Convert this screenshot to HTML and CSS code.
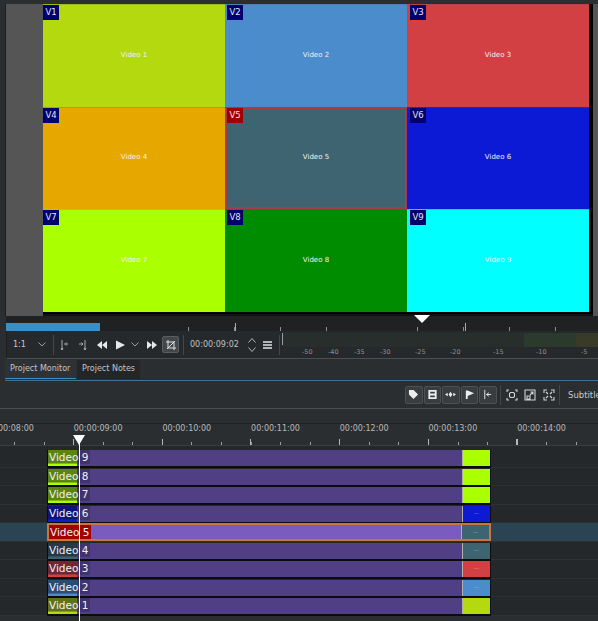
FILE: index.html
```html
<!DOCTYPE html>
<html lang="en">
<head>
    <meta charset="UTF-8">
    <title>Project Monitor</title>
    <link rel="stylesheet" href="styles.css">
</head>
<body>
<div class="app">
    <div class="monitor">
        <div class="side_rail"></div>
        <div class="canvas">
            <div class="multicam">
                <div class="cam c1"><span class="cam_tag">V1</span><span class="cam_name">Video 1</span></div>
                <div class="cam c2"><span class="cam_tag">V2</span><span class="cam_name">Video 2</span></div>
                <div class="cam c3"><span class="cam_tag">V3</span><span class="cam_name">Video 3</span></div>
                <div class="cam c4"><span class="cam_tag">V4</span><span class="cam_name">Video 4</span></div>
                <div class="cam c5 cam_active"><span class="cam_tag tag_active">V5</span><span class="cam_name">Video 5</span></div>
                <div class="cam c6"><span class="cam_tag">V6</span><span class="cam_name">Video 6</span></div>
                <div class="cam c7"><span class="cam_tag">V7</span><span class="cam_name">Video 7</span></div>
                <div class="cam c8"><span class="cam_tag">V8</span><span class="cam_name">Video 8</span></div>
                <div class="cam c9"><span class="cam_tag">V9</span><span class="cam_name">Video 9</span></div>
            </div>
        </div>
    </div>

    <div class="monitor_ruler">
        <div class="zone"></div>
        <div class="ruler_head"></div>
    </div>

    <div class="controls">
        <span class="zoom_value">1:1</span>
        <svg class="chev" viewBox="0 0 8 5"><path d="M.5 .5 4 4 7.500 .5"/></svg>
        <span class="divider first_divider"></span>
        <svg class="ctl" viewBox="0 0 12 12"><path d="M4 1v10M3 9l1 2 1-2M6 5h3M8 3.500 9.500 5 8 6.500"/></svg>
        <svg class="ctl" viewBox="0 0 12 12"><path d="M8 1v10M7 9l1 2 1-2M2 5h4M4.500 3.500 6 5 4.500 6.500"/></svg>
        <svg class="ctl solid" viewBox="0 0 12 12"><path d="M6 2v8L1 6zM11 2v8L6 6z"/></svg>
        <svg class="ctl solid play" viewBox="0 0 12 12"><path d="M2 1.500 11 6 2 10.500z"/></svg>
        <svg class="chev small_chev" viewBox="0 0 8 5"><path d="M.5 .5 4 4 7.500 .5"/></svg>
        <svg class="ctl solid forward" viewBox="0 0 12 12"><path d="M1 2v8l5-4zM6 2v8l5-4z"/></svg>
        <span class="crop_btn">
            <svg class="ctl crop_icon" viewBox="0 0 12 12"><path d="M3 1v8h8M1 3h8v8M2 10 10 2"/></svg>
        </span>
        <span class="divider crop_divider"></span>
        <span class="timecode">00:00:09:02</span>
        <svg class="spin" viewBox="0 0 8 16"><path d="M.5 5.500 4 1.500 7.500 5.500M.5 10.500 4 14.500 7.500 10.500"/></svg>
        <svg class="menu_icon" viewBox="0 0 9 8"><path d="M0 1h9M0 4h9M0 7h9"/></svg>
        <span class="divider meter_divider"></span>
        <div class="meter">
            <div class="meter_bar"><span class="peak"></span></div>
            <div class="meter_scale">
                <span class="step_s">-50</span>
                <span class="step_s">-40</span>
                <span class="step_s">-35</span>
                <span class="step_m">-30</span>
                <span class="step_m">-25</span>
                <span class="step_l">-20</span>
                <span class="step_l">-15</span>
                <span class="step_e">-10</span>
                <span>-5</span>
            </div>
        </div>
    </div>

    <div class="tabs">
        <span class="tab tab_on">Project Monitor</span>
        <span class="tab">Project Notes</span>
    </div>

    <div class="toolbar">
        <div class="tool_group">
            <span class="tool"><svg viewBox="0 0 12 12"><path class="fill" d="M1 1h5l5 5-5 5-5-5z"/></svg></span>
            <span class="tool"><svg viewBox="0 0 12 12"><path class="fill" d="M1.500 1h9v10h-9zM3.500 3v2h5V3zM3.500 7v2h5V7z" fill-rule="evenodd"/></svg></span>
            <span class="tool"><svg viewBox="0 0 12 12"><path class="fill" d="M4 6l2-3 2 3-2 3zM0 6l3-2v4zM12 6 9 8V4z"/></svg></span>
            <span class="tool"><svg viewBox="0 0 12 12"><path class="fill" d="M2 1.500h2l7 3-7 3V11H2z"/></svg></span>
            <span class="tool"><svg viewBox="0 0 12 12"><path class="line" d="M3 1v10M5 6h5M7.500 4 5 6l2.500 2"/></svg></span>
        </div>
        <span class="divider tool_divider"></span>
        <svg class="view_icon" viewBox="0 0 12 12"><path d="M1 3V1h2M9 1h2v2M11 9v2H9M3 11H1V9M4.500 3.500h3l1 1v3l-1 1h-3l-1-1v-3z"/></svg>
        <svg class="view_icon" viewBox="0 0 12 12"><path d="M1 1h10v10H1zM3 7h3v3H3zM6 6l3-3M6.500 3H9v2.500"/></svg>
        <svg class="view_icon" viewBox="0 0 12 12"><path d="M1 4V1h3M8 1h3v3M11 8v3H8M4 11H1V8M5 5 3 3M7 5l2-2M7 7l2 2M5 7l-2 2"/></svg>
        <span class="divider subtitle_divider"></span>
        <span class="subtitle">Subtitle</span>
    </div>

    <div class="gap_bar"></div>

    <div class="time_ruler">
        <div class="time_labels">
            <span>00:00:08:00</span>
            <span>00:00:09:00</span>
            <span>00:00:10:00</span>
            <span>00:00:11:00</span>
            <span>00:00:12:00</span>
            <span>00:00:13:00</span>
            <span>00:00:14:00</span>
        </div>
    </div>

    <div class="tracks">
        <div class="track"><div class="clip"><div class="thumb c7"><span class="clip_name">Video 9</span></div><div class="clip_body"></div><div class="thumb_end c7"></div></div></div>
        <div class="track"><div class="clip"><div class="thumb c7"><span class="clip_name">Video 8</span></div><div class="clip_body"></div><div class="thumb_end c7"></div></div></div>
        <div class="track"><div class="clip"><div class="thumb c7"><span class="clip_name">Video 7</span></div><div class="clip_body"></div><div class="thumb_end c7"></div></div></div>
        <div class="track"><div class="clip"><div class="thumb c6"><span class="clip_name">Video 6</span></div><div class="clip_body"></div><div class="thumb_end c6">...</div></div></div>
        <div class="track track_on"><div class="clip clip_on"><div class="thumb c5"><span class="clip_name name_on">Video 5</span></div><div class="clip_body"></div><div class="thumb_end c5">...</div></div></div>
        <div class="track"><div class="clip"><div class="thumb c5"><span class="clip_name">Video 4</span></div><div class="clip_body"></div><div class="thumb_end c5">...</div></div></div>
        <div class="track"><div class="clip"><div class="thumb c3"><span class="clip_name">Video 3</span></div><div class="clip_body"></div><div class="thumb_end c3">...</div></div></div>
        <div class="track"><div class="clip"><div class="thumb c2"><span class="clip_name">Video 2</span></div><div class="clip_body"></div><div class="thumb_end c2">...</div></div></div>
        <div class="track"><div class="clip"><div class="thumb c1"><span class="clip_name">Video 1</span></div><div class="clip_body"></div><div class="thumb_end c1"></div></div></div>
    </div>

    <div class="playhead"></div>
</div>
</body>
</html>
```

FILE: styles.css
```css
* {
    box-sizing: border-box;
}

html, body {
    margin: 0;
    padding: 0;
    background: #2b2e31;
}

body {
    width: 598px;
    height: 621px;
    overflow: hidden;
    font-family: "DejaVu Sans", sans-serif;
    font-size: 8px;
    color: #c9cccd;
}

.app {
    position: relative;
    width: 598px;
    height: 621px;
}

/* monitor */

.monitor {
    display: flex;
    height: 316px;
    padding-top: 4px;
    background: #2b2e31;
}

.side_rail {
    width: 6px;
    border-right: 1px solid #1b1d1f;
}

.canvas {
    display: flex;
    flex: 1;
    padding-left: 37px;
    background: #555555;
}

.multicam {
    display: grid;
    grid-template-columns: 182px 182px 182px;
    grid-template-rows: 103px 102px 103px;
    width: 550px;
    height: 312px;
    padding-right: 4px;
    background: #000;
    border-bottom: 2px solid #101112;
    align-content: start;
}

.cam {
    display: flex;
    align-items: center;
    justify-content: center;
    position: relative;
    padding-bottom: 2px;
    box-shadow: inset 0 1px 0 rgba(90, 90, 90, 0.25);
}

.cam_tag {
    position: absolute;
    top: 1px;
    left: 0;
    width: 16px;
    height: 15px;
    background: #00006e;
    color: #e6e6f0;
    font-size: 8.500px;
    line-height: 15px;
    text-align: center;
}

.cam:nth-child(3n+2) .cam_tag {
    left: 2px;
}

.cam:nth-child(3n) .cam_tag {
    left: 3px;
}

.tag_active {
    background: #a00000;
}

.cam_name {
    color: #f2f2f2;
    font-size: 7px;
}

.cam_active {
    box-shadow: inset 1px 1px 0 1px #a83a4c, inset -1px -1px 0 1px #a83a4c;
}

.c1 { background-color: #b5d90f; }
.c2 { background-color: #4a8ccc; }
.c3 { background-color: #d24044; }
.c4 { background-color: #e6a800; }
.c5 { background-color: #3d6470; }
.c6 { background-color: #0c1ad6; }
.c7 { background-color: #aaff00; }
.c8 { background-color: #008c00; }
.c9 { background-color: #00ffff; }

.monitor_ruler {
    position: relative;
    height: 15px;
    margin-left: 6px;
    background-color: #1f2123;
    background-image:
        repeating-linear-gradient(90deg, transparent 0, transparent 229px, #a9acae 229px, #a9acae 230px),
        repeating-linear-gradient(90deg, transparent 0, transparent 45px, #8d8f91 45px, #8d8f91 45.800px);
    background-position: 0 7px, 0 11px;
    background-size: 100% 8px, 100% 4px;
    background-repeat: no-repeat;
}

.zone {
    position: absolute;
    left: 0;
    bottom: 0;
    width: 94px;
    height: 8px;
    background: #3a8fc4;
}

.ruler_head {
    position: absolute;
    left: 408px;
    top: -1px;
    border-top: 8px solid #fff;
    border-left: 8px solid transparent;
    border-right: 8px solid transparent;
}

.controls {
    display: flex;
    align-items: center;
    height: 28px;
    margin-left: 6px;
    border-left: 1px solid #1b1d1f;
    border-bottom: 1px solid #4c4f52;
    background: #26292b;
}

.zoom_value {
    width: 24px;
    padding-left: 6px;
    font-size: 8px;
}

.chev {
    width: 8px;
    height: 5px;
    margin-left: 7px;
    fill: none;
    stroke: #9a9d9f;
    stroke-width: 1;
}

.small_chev {
    margin: 0 7px 0 0;
}

.divider {
    flex: none;
    width: 1px;
    height: 20px;
    background: #44474a;
}

.first_divider {
    margin: 0 4px 0 7px;
}

.crop_divider {
    margin: 0 6px 0 4px;
}

.meter_divider {
    margin: 0 2px 0 7px;
}

.ctl {
    flex: none;
    width: 12px;
    height: 12px;
    margin-right: 7px;
    fill: none;
    stroke: #a9acae;
    stroke-width: 1;
}

.ctl.solid {
    margin-right: 6px;
    fill: #e8e8e8;
    stroke: none;
}

.ctl.play {
    margin-right: 5px;
}

.ctl.forward {
    margin-right: 4px;
}

.crop_btn {
    display: flex;
    flex: none;
    align-items: center;
    justify-content: center;
    width: 17px;
    height: 17px;
    border: 1px solid #5a5d60;
    border-radius: 2px;
    background: #44474a;
}

.crop_icon {
    margin: 0;
    stroke: #e0e0e0;
}

.timecode {
    flex: none;
    width: 54px;
    color: #bfc2c4;
    font-size: 8px;
    white-space: nowrap;
}

.spin {
    flex: none;
    width: 8px;
    height: 16px;
    margin-left: 4px;
    fill: none;
    stroke: #b5b8ba;
}

.menu_icon {
    flex: none;
    width: 9px;
    height: 8px;
    margin-left: 7px;
    stroke: #e2e2e2;
    stroke-width: 1.300;
}

.meter {
    display: flex;
    flex: 1;
    flex-direction: column;
    height: 27px;
    padding-top: 2px;
    overflow: hidden;
}

.meter_bar {
    height: 14px;
    background: linear-gradient(90deg, #272e2b 0, #272e2b 242px, #2c3a2d 242px, #2c3a2d 294px, #3a3a29 294px);
}

.peak {
    display: block;
    width: 1px;
    height: 12px;
    background: #9a9d9f;
}

.meter_scale {
    display: flex;
    height: 11px;
    padding-left: 20px;
    color: #8d9092;
    font-size: 6.500px;
    line-height: 11px;
}

.meter_scale span {
    flex: none;
}

.step_s { width: 26px; }
.step_m { width: 35px; }
.step_l { width: 43px; }
.step_e { width: 45px; }

.tabs {
    display: flex;
    height: 22px;
    margin-left: 5px;
    padding-top: 1px;
    border-bottom: 1px solid #44708c;
}

.tab {
    height: 19px;
    padding: 0 5px;
    background: #232527;
    color: #c2c5c7;
    font-size: 8px;
    line-height: 18px;
    white-space: nowrap;
}

.tab_on {
    width: 71px;
    margin-right: 1px;
    background: #2f3235;
    border-bottom: 1px solid #3a8fc4;
}

.toolbar {
    display: flex;
    align-items: center;
    height: 28px;
    padding-left: 405px;
    border-bottom: 1px solid #4c4f52;
    white-space: nowrap;
}

.tool_group {
    display: flex;
    gap: 1px;
}

.tool {
    display: flex;
    align-items: center;
    justify-content: center;
    width: 17.500px;
    height: 18px;
    border: 1px solid #4e5154;
    border-radius: 2px;
    background: #3a3d40;
}

.tool svg {
    width: 11px;
    height: 11px;
}

.fill {
    fill: #ececec;
}

.line {
    fill: none;
    stroke: #ececec;
}

.tool_divider {
    margin: 0 5px 0 3px;
}

.subtitle_divider {
    margin: 0 8px 0 -2px;
}

.view_icon {
    flex: none;
    width: 12px;
    height: 12px;
    margin-right: 6.500px;
    fill: none;
    stroke: #d0d3d5;
    stroke-width: 1.100;
}

.subtitle {
    font-size: 8.500px;
    color: #c9cccd;
}

.gap_bar {
    height: 15px;
    border-bottom: 1px solid #1f2123;
}

.time_ruler {
    height: 22px;
    border-bottom: 1px solid #3c3f42;
    background-image:
        repeating-linear-gradient(90deg, #b5b8ba 0, #b5b8ba 1px, transparent 1px, transparent 88.700px),
        repeating-linear-gradient(90deg, #9a9d9f 0, #9a9d9f 1px, transparent 1px, transparent 29.570px);
    background-position: 73px 15px, 14px 18px;
    background-size: 100% 6px, 100% 3px;
    background-repeat: no-repeat;
}

.time_labels {
    display: flex;
    margin-left: -15px;
    color: #b5b8ba;
    line-height: 10px;
    font-size: 8px;
}

.time_labels span {
    flex: 0 0 88.700px;
}

.tracks {
    display: flex;
    flex-direction: column;
    padding-top: 3px;
    background: #25282a;
}

.track {
    height: 18.500px;
    padding: 1px 0 0 47px;
    border-bottom: 1px solid #2e3133;
}

.track_on {
    background: #2a4454;
}

.clip {
    display: flex;
    width: 444px;
    height: 18px;
    border: 1px solid #0c0c0e;
    border-top: 0;
    border-bottom-width: 2px;
    background: #000;
}

.clip_on {
    height: 18px;
    margin-top: -1px;
    border: 2px solid #c8763f;
}

.thumb {
    position: relative;
    width: 29px;
    background-image: linear-gradient(rgba(0, 0, 0, 0.3), rgba(0, 0, 0, 0.3));
    background-size: 100% 13px;
    background-repeat: no-repeat;
}

.clip_name {
    position: absolute;
    top: 0;
    left: 0;
    padding: 0 2px 0 1px;
    background: rgba(30, 25, 60, 0.3);
    color: #f0f0f0;
    font-size: 10.500px;
    line-height: 14px;
    white-space: nowrap;
}

.name_on {
    background: #a30000;
}

.clip_body {
    flex: 1;
    background: #513f85;
}

.clip_on .clip_body {
    background: #7a5cc0;
}

.thumb_end {
    width: 28px;
    border-left: 1px solid #b0b0a8;
    color: #d0d8e0;
    font-size: 5px;
    line-height: 13px;
    text-align: center;
}

.playhead {
    position: absolute;
    left: 79px;
    top: 443px;
    bottom: 0;
    width: 1px;
    background: #fff;
}

.playhead::before {
    content: "";
    position: absolute;
    left: -6px;
    top: -8px;
    border-top: 10px solid #fff;
    border-left: 6.500px solid transparent;
    border-right: 6.500px solid transparent;
}
```
